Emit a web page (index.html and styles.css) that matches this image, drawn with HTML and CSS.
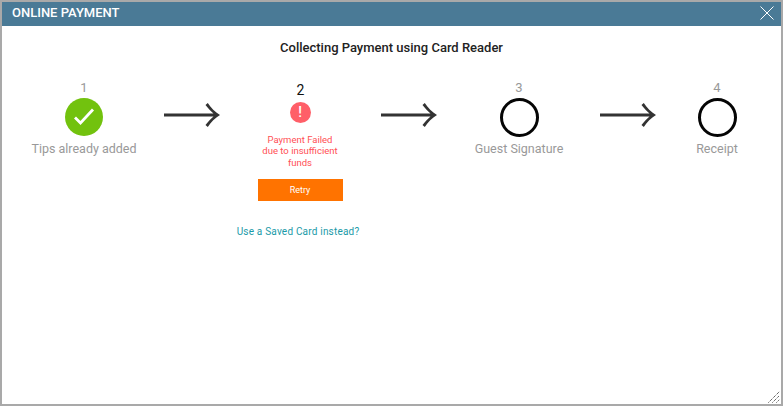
FILE: index.html
```html
<!DOCTYPE html>
<html lang="en">
<head>
    <meta charset="UTF-8">
    <title>Online Payment</title>
    <link rel="stylesheet" href="styles.css">
</head>
<body>

    <div class="dialog">
        <!-- Title bar -->
        <div class="title-bar">
            <span class="title-text">ONLINE PAYMENT</span>
            <svg class="close-icon" width="14" height="14" viewBox="0 0 14 14">
                <path d="M0.5 0.5L13.5 13.5M13.5 0.5L0.5 13.5" stroke="#fff" stroke-width="1" fill="none"/>
            </svg>
        </div>

        <div class="dialog-body">
            <h2 class="heading">Collecting Payment using Card Reader</h2>

            <div class="steps">
                <div class="step step-first">
                    <div class="step-num">1</div>
                    <svg class="step-icon" width="38" height="38" viewBox="0 0 38 38">
                        <circle cx="19" cy="19" r="19" fill="#72c20e"/>
                        <path d="M10 19.5L15.5 25L28 11.5" stroke="#fff" stroke-width="2.8" fill="none"/>
                    </svg>
                    <div class="step-label">Tips already added</div>
                </div>

                <svg class="arrow arrow-first" width="56" height="24" viewBox="0 0 56 24">
                    <path d="M0 10.4H49.5C46.5 8 44 5 41.5 2L43.8 0C47 5 51 9 56 12C51 15 47 19 43.8 24L41.5 22C44 19 46.5 16 49.5 13.6H0Z" fill="#333"/>
                </svg>

                <div class="step step-active">
                    <div class="step-num">2</div>
                    <div class="alert-icon">!</div>
                    <div class="fail-text">Payment Failed<br>due to insufficient<br>funds</div>
                    <button class="retry-btn">Retry</button>
                    <a class="saved-link" href="#">Use a Saved Card instead?</a>
                </div>

                <svg class="arrow arrow-second" width="56" height="24" viewBox="0 0 56 24">
                    <path d="M0 10.4H49.5C46.5 8 44 5 41.5 2L43.8 0C47 5 51 9 56 12C51 15 47 19 43.8 24L41.5 22C44 19 46.5 16 49.5 13.6H0Z" fill="#333"/>
                </svg>

                <div class="step step-third">
                    <div class="step-num">3</div>
                    <div class="step-ring"></div>
                    <div class="step-label">Guest Signature</div>
                </div>

                <svg class="arrow arrow-third" width="56" height="24" viewBox="0 0 56 24">
                    <path d="M0 10.4H49.5C46.5 8 44 5 41.5 2L43.8 0C47 5 51 9 56 12C51 15 47 19 43.8 24L41.5 22C44 19 46.5 16 49.5 13.6H0Z" fill="#333"/>
                </svg>

                <div class="step step-last">
                    <div class="step-num">4</div>
                    <div class="step-ring"></div>
                    <div class="step-label">Receipt</div>
                </div>
            </div>
        </div>

        <!-- Resize handle -->
        <svg class="resize-handle" width="12" height="12" viewBox="0 0 12 12">
            <path d="M0.5 11.5L11.5 0.5M4.5 11.5L11.5 4.5M8.5 11.5L11.5 8.5" stroke="#222" stroke-width="1" stroke-dasharray="1 1" fill="none"/>
        </svg>
    </div>

</body>
</html>
```

FILE: styles.css
```css
/* Reset styles */
* {
    margin: 0;
    padding: 0;
    box-sizing: border-box;
}

body {
    font-family: Roboto, sans-serif;
    background-color: #fff;
    overflow: hidden;
}

.dialog {
    position: relative;
    width: 783px;
    height: 406px;
    border: 2px solid #a9a9a9;
    background-color: #fff;
}

/* Title bar */
.title-bar {
    display: flex;
    justify-content: space-between;
    align-items: center;
    height: 24px;
    padding: 0 7px 3px 10px;
    background-color: #4a7a96;
}

.title-text {
    color: #fff;
    font-size: 13px;
    font-weight: 500;
}

.heading {
    margin-top: 15px;
    text-align: center;
    font-size: 13px;
    font-weight: 500;
    line-height: 14px;
    color: #222;
}

/* Steps row */
.steps {
    display: flex;
    align-items: flex-start;
    margin-top: 25px;
    padding-left: 22px;
}

.step {
    display: flex;
    flex-direction: column;
    align-items: center;
    flex: none;
    width: 120px;
}

.step-last {
    width: 114px;
}

.step-num {
    font-size: 13px;
    line-height: 15px;
    color: #999;
}

.step-icon {
    display: block;
    margin-top: 3px;
    margin-bottom: 1px;
}

.step-ring {
    width: 39px;
    height: 39px;
    margin-top: 3px;
    border: 3px solid #050505;
    border-radius: 50%;
}

.step-label {
    font-size: 12.5px;
    line-height: 15px;
    margin-top: 4px;
    color: #999;
}

.arrow {
    flex: none;
    margin-top: 23px;
}

.arrow-first {
    margin-left: 20px;
    margin-right: 20px;
}

.arrow-second {
    margin-left: 21px;
    margin-right: 22px;
}

.arrow-third {
    margin-left: 21px;
    margin-right: 4px;
}

/* Active step */
.step-active .step-num {
    padding-top: 2px;
    padding-left: 1px;
    color: #111;
    font-size: 14px;
    line-height: 16px;
}

.alert-icon {
    width: 21px;
    height: 21px;
    margin-top: 4px;
    border-radius: 50%;
    background-color: #ff5f68;
    color: #fff;
    font-size: 14px;
    font-weight: 500;
    line-height: 21px;
    text-align: center;
}

.fail-text {
    margin-top: 10.5px;
    font-size: 9.5px;
    line-height: 11.5px;
    text-align: center;
    color: #ff4f55;
}

.retry-btn {
    width: 85px;
    height: 22px;
    margin-top: 11px;
    border: none;
    background-color: #ff7300;
    color: #fff;
    font-family: Roboto, sans-serif;
    font-size: 9px;
}

.saved-link {
    margin-top: 25px;
    margin-left: -4px;
    font-size: 10px;
    line-height: 12px;
    letter-spacing: 0.2px;
    white-space: nowrap;
    color: #1a9aa8;
    text-decoration: none;
}

.resize-handle {
    position: absolute;
    right: 1px;
    bottom: 1px;
}
```
